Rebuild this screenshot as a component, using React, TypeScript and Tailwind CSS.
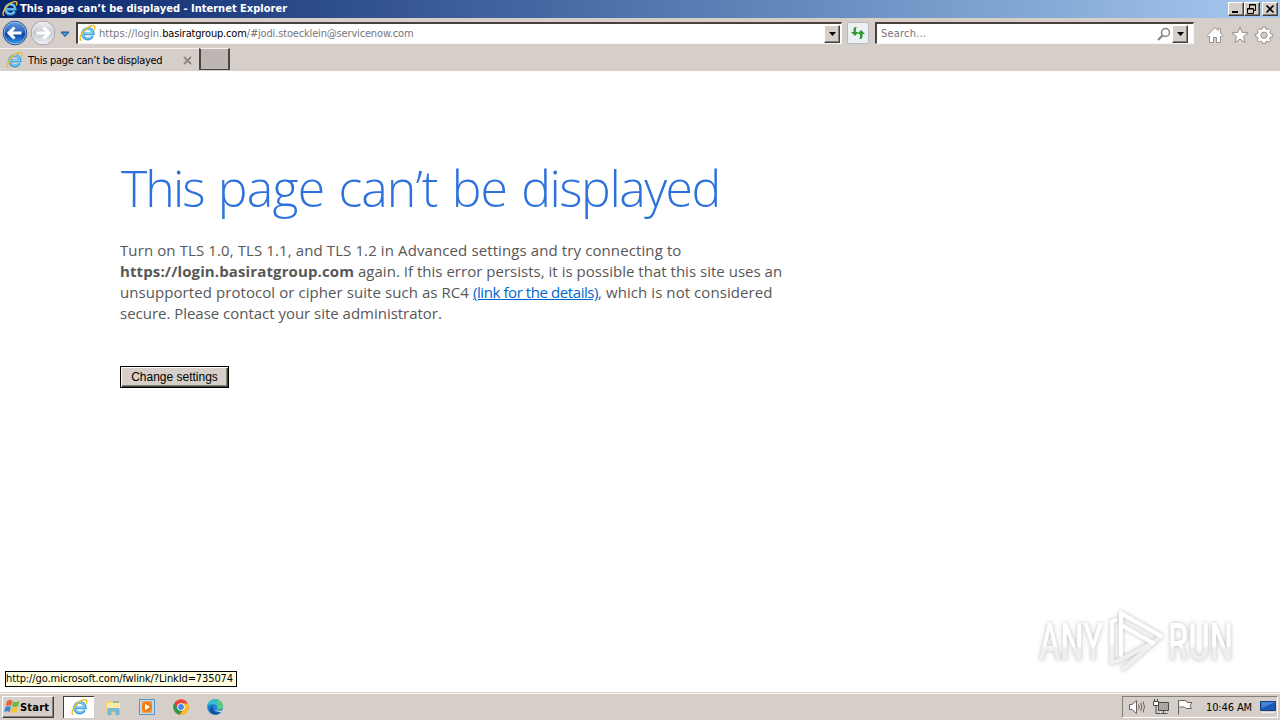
import type { ReactNode } from 'react';

const ui = "font-['DejaVu_Sans_Condensed','DejaVu_Sans',sans-serif] [font-stretch:condensed]";
const raised =
  'border border-t-white border-l-white border-r-[#404040] border-b-[#404040] bg-[#d6cfc9] shadow-[inset_-1px_-1px_0_#848078]';
const sunken = 'border-t-2 border-l-2 border-t-[#48413e] border-l-[#48413e] border-b border-r border-b-[#f8f6f4] border-r-[#f8f6f4] bg-white';

function IeIcon({ size = 17 }: { size?: number }) {
  return (
    <svg width={size} height={size} viewBox="0 0 17 17" fill="none" className="shrink-0">
      <path d="M13.6 11.2A5.3 5.3 0 1 1 14.2 8.9H5.2" stroke="#3b9be0" strokeWidth="2.9" />
      <path d="M13.2 10.8A5 5 0 1 1 13.8 8.5H5.2" stroke="#7bd0f5" strokeWidth="1.3" />
      <path d="M2.4 15.6C-.6 14.6 2.2 7.4 7.2 3.6C11.4.2 15.8-.3 15.8 2.4C15.8 3.3 15.5 4 15.1 4.8" stroke="#f0bd2c" strokeWidth="1.5" />
    </svg>
  );
}

function NavButton({ forward = false }: { forward?: boolean }) {
  return (
    <svg width="26" height="26" viewBox="0 0 26 26" className="shrink-0">
      <defs>
        <linearGradient id="back" x2="0" y2="1">
          <stop stopColor="#6a9bdf" />
          <stop offset=".48" stopColor="#2763bd" />
          <stop offset=".52" stopColor="#0a3f9d" />
          <stop offset="1" stopColor="#39a3ee" />
        </linearGradient>
        <linearGradient id="fwd" x2="0" y2="1">
          <stop stopColor="#f1f2f5" />
          <stop offset=".5" stopColor="#c6c9d1" />
          <stop offset="1" stopColor="#eef1f5" />
        </linearGradient>
      </defs>
      <circle cx="13" cy="13" r="11.8" fill={forward ? 'url(#fwd)' : 'url(#back)'} stroke={forward ? '#9da1aa' : '#294f8d'} />
      <circle cx="13" cy="13" r="10.9" fill="none" stroke="#fff" strokeOpacity=".45" />
      <path
        d="M12.5 7.5L7 13L12.5 18.5M7.5 13H19.5"
        fill="none"
        stroke="#fff"
        strokeWidth="3"
        transform={forward ? 'translate(26 0) scale(-1 1)' : undefined}
      />
    </svg>
  );
}

function DropButton() {
  return (
    <div className={`${raised} flex h-[18px] w-4 shrink-0 items-center justify-center`}>
      <svg width="7" height="4">
        <path d="M0 0H7L3.5 4Z" fill="#000" />
      </svg>
    </div>
  );
}

function WindowButton({ children }: { children: ReactNode }) {
  return (
    <div className={`${raised} h-[14px] w-4`}>
      <svg width="14" height="12" fill="none" stroke="#000">
        {children}
      </svg>
    </div>
  );
}

function TitleBar() {
  return (
    <div className="flex h-[18px] items-center bg-linear-to-r from-[#0a246a] to-[#a6caf0] pl-0.5">
      <IeIcon size={16} />
      <span className={`${ui} ml-0.5 pt-px text-[11px] font-bold tracking-[0.01px] whitespace-nowrap text-white`}>
        This page can’t be displayed - Internet Explorer
      </span>
      <div className="mr-[2px] ml-auto flex">
        <WindowButton>
          <path d="M3 9H9" strokeWidth="2" />
        </WindowButton>
        <WindowButton>
          <path d="M4.5 5V1.5H10.5V7.5H8M4 2H11M2.5 5.5H8.5V10.5H2.5ZM2 6H9" />
        </WindowButton>
        <div className="w-[2px]" />
        <WindowButton>
          <path d="M3.5 2.5L10.5 9.5M10.5 2.5L3.5 9.5" strokeWidth="1.7" />
        </WindowButton>
      </div>
    </div>
  );
}

function AddressRow() {
  return (
    <div className="flex h-[30px] items-start pt-1 pl-[2px]">
      <div className="-mt-0.5 flex gap-[2px]">
        <NavButton />
        <NavButton forward />
      </div>
      <svg width="10" height="7" className="mt-[9px] ml-1">
        <path d="M1 1H9L5 5.5Z" fill="#3b9be0" stroke="#1b4a80" />
      </svg>
      <div className={`${sunken} ml-[6px] flex h-[22px] w-[766px] items-center pl-px`}>
        <IeIcon />
        <div className={`${ui} ml-[3px] pt-[2px] text-[11px] whitespace-nowrap text-[#77757a]`}>
          <span className="tracking-[0.03px]">https://login.</span>
          <span className="tracking-[-0.17px] text-black">basiratgroup.com</span>
          <span className="tracking-[-0.16px]">/#jodi.stoecklein@servicenow.com</span>
        </div>
        <div className="mr-px ml-auto">
          <DropButton />
        </div>
      </div>
      <div className="ml-[5px] flex h-[22px] w-[22px] items-center justify-center rounded-xs border border-[#b5bac3] bg-[#eceff3]">
        <svg width="16" height="16" fill="#299b2f">
          <path d="M7 2C3 2 3.5 4 3.5 7H1L5 11L8.5 7H6C6 4 5.5 3.5 7 2ZM9 14C13 14 12.5 12 12.5 9H15L11 5L7.5 9H10C10 12 10.5 12.5 9 14Z" />
        </svg>
      </div>
      <div className={`${sunken} ml-[6px] flex h-[22px] w-[319px] items-center pr-[5px] pl-[4px]`}>
        <span className={`${ui} pt-[2px] text-[11px] tracking-[0.2px] text-[#77757a]`}>Search...</span>
        <svg width="14" height="14" fill="none" stroke="#85827f" className="mr-px ml-auto">
          <circle cx="8.5" cy="5.5" r="4" strokeWidth="1.5" />
          <path d="M5.5 8.5L1 13" strokeWidth="2.2" />
        </svg>
        <DropButton />
      </div>
      <div className="mt-1 ml-3 flex gap-[6.5px]">
        <svg width="18" height="18" fill="#fff" stroke="#96918d">
          <path d="M1 9.5L9 1.5L12 4.5V2.5H14.5V7L17 9.5L15.5 11L14.5 10V16.5H10.5V11.5H7.5V16.5H3.5V10L2.5 11Z" />
        </svg>
        <svg width="18" height="18" fill="#fff" stroke="#96918d">
          <path d="M9 1L11.2 6.4L17 6.8L12.5 10.6L14 16.4L9 13.2L4 16.4L5.5 10.6L1 6.8L6.8 6.4Z" />
        </svg>
        <svg width="18" height="18" viewBox="0 0 18 18" fill="#fff" stroke="#96918d">
          <path d="M7.5 1H10.5L10.9 3.1L12.2 3.6L14 2.4L16 4.5L14.8 6.3L15.3 7.5L17.3 8V11L15.2 11.4L14.7 12.6L15.8 14.4L13.7 16.4L12 15.2L10.8 15.7L10.4 17.5H7.5L7 15.6L5.8 15L4.1 16.2L2 14.1L3.1 12.4L2.6 11.2L.7 10.8V7.9L2.7 7.5L3.2 6.2L2.1 4.5L4.1 2.4L5.8 3.6L7.1 3.1Z" />
          <circle cx="9" cy="9.2" r="3.1" fill="#d6cfc9" />
        </svg>
      </div>
    </div>
  );
}

function TabRow() {
  return (
    <div className="flex h-[23px] items-start">
      <div className="flex h-[23px] w-[199px] items-center border-t border-[#f3f0ee] pl-[6px]">
        <IeIcon />
        <span className={`${ui} ml-[5px] pt-[2px] text-[11px] tracking-[-0.28px] whitespace-nowrap text-black`}>This page can’t be displayed</span>
        <svg width="9" height="9" className="mr-[7px] ml-auto">
          <path d="M1 1L8 8M8 1L1 8" stroke="#8b8682" strokeWidth="1.8" />
        </svg>
      </div>
      <div className="h-[22px] w-[31px] border-x-2 border-b border-t border-t-[#f3f0ee] border-r-[#484442] border-b-[#484442] border-l-[#484442] bg-[#bdb6b2]" />
    </div>
  );
}

function ErrorPage() {
  return (
    <main className="flex-1 bg-white pt-[82px] pl-[120px]">
      <h1 className="ml-px font-['Open_Sans','Noto_Sans',sans-serif] text-[50px] leading-[70px] font-light tracking-[-0.9px] [word-spacing:2px] whitespace-nowrap text-[#2d72dc]">
        <span className="tracking-[-1.9px]">This</span> <span className="tracking-[-0.8px]">page</span> can’t be{' '}
        <span className="tracking-[-1.5px]">displayed</span>
      </h1>
      <div className="mt-[17px] flex flex-col font-['Open_Sans','Noto_Sans',sans-serif] text-[15px] leading-[21px] whitespace-nowrap text-[#575757]">
        <span className="tracking-[0.107px]">Turn on TLS 1.0, TLS 1.1, and TLS 1.2 in Advanced settings and try connecting to</span>
        <span>
          <b className="tracking-[0.12px]">https://login.basiratgroup.com</b>
          <span className="tracking-[0.02px]"> again. If this error persists, it is possible that this site uses an</span>
        </span>
        <span>
          <span className="tracking-[0.07px]">unsupported protocol or cipher suite such as RC4 </span>
          <a className="tracking-[-0.42px] text-[#0066cc] underline">(link for the details)</a>
          <span className="tracking-[0.07px]">, which is not considered</span>
        </span>
        <span className="tracking-[-0.02px]">secure. Please contact your site administrator.</span>
      </div>
      <button className="mt-[42px] block h-[22px] w-[109px] border border-black bg-[#d6cfc9] font-['Liberation_Sans',sans-serif] text-[12px] leading-[18px] text-black shadow-[inset_1px_1px_0_#fff,inset_-1px_-1px_0_#404040,inset_-2px_-2px_0_#848078]">
        Change settings
      </button>
    </main>
  );
}

function Watermark() {
  return (
    <svg
      width="220"
      height="90"
      viewBox="1030 595 220 90"
      className="absolute top-[596px] left-[1030px] overflow-visible drop-shadow-[0_0_2px_#bbbbbb]"
    >
      <defs>
        <linearGradient id="wm" x2="0" y2="1">
          <stop offset=".55" stopColor="#fff" />
          <stop offset=".6" stopColor="#efefef" />
        </linearGradient>
      </defs>
      <g fill="url(#wm)" fontFamily="Roboto, sans-serif" fontSize="51" fontWeight="500">
        <text x="1039" y="659" textLength="64" lengthAdjust="spacingAndGlyphs">ANY</text>
        <text x="1168" y="659" textLength="65" lengthAdjust="spacingAndGlyphs">RUN</text>
      </g>
      <g fill="none" strokeLinejoin="round" strokeLinecap="round" strokeWidth="4">
        <path d="M1121 655V613L1161 635L1123 668" stroke="#f0f0f0" />
        <path d="M1116 619L1112 621V662L1120 659L1154 641" stroke="#f0f0f0" />
        <path d="M1121 654V612L1161 635M1112 642V621L1115 619M1123 625L1153 642" stroke="#fff" />
      </g>
    </svg>
  );
}

function StartFlag() {
  return (
    <svg width="17" height="16" viewBox="0 0 17 16">
      <path d="M3 2C5 .6 7 1 8.5 2L7.2 7C5.5 6 4 6 1.8 7Z" fill="#e8632c" />
      <path d="M9.3 2.4C11 3.4 13 3.4 15.5 2L14.2 7C12 8.2 10 8.2 8 7.2Z" fill="#6eb440" />
      <path d="M1.5 8C3.5 6.9 5.5 6.9 7 8L5.6 13C4 12 2 12 .2 13Z" fill="#3a87d3" />
      <path d="M7.8 8.2C10 9.3 12 9.3 14 8L12.6 13C10.5 14.3 8.5 14 6.4 13Z" fill="#f7c331" />
    </svg>
  );
}

function Taskbar() {
  return (
    <div className="flex h-[28px] items-start border-t border-[#d6cfc9] bg-[#d6cfc9] pt-[3px] pl-[2px] shadow-[inset_0_1px_0_#fff]">
      <div className={`${raised} flex h-[22px] w-[52px] items-center pl-px`}>
        <StartFlag />
        <span className={`${ui} -ml-px pt-[2px] text-[11px] font-bold tracking-[0.2px] text-black`}>Start</span>
      </div>
      <div className="ml-[9px] flex h-[22px] w-[31px] items-center justify-center border-t border-l border-t-[#404040] border-l-[#404040] bg-white">
        <IeIcon />
      </div>
      <div className="mt-[3px] ml-[11px] flex gap-[18px]">
        <svg width="16" height="16">
          <path d="M1 2H6L7 3.5H15V14H1Z" fill="#efd27a" />
          <path d="M2 4H15V10H2Z" fill="#fae9a8" />
          <path d="M8 3H14" stroke="#5ba75a" />
          <path d="M3 15.5V9.5H14V15.5H11V12H6V15.5Z" fill="#78bfe2" stroke="#4d9ac5" strokeWidth=".6" />
        </svg>
        <svg width="16" height="16">
          <path d="M.5.5H15.5V15.5H.5Z" fill="#b8dcf3" stroke="#5a94c4" />
          <path d="M3 2H13V14H3Z" fill="#f3a04a" />
          <circle cx="8" cy="8" r="5.2" fill="#ef7d14" />
          <path d="M6 4.7L11 8L6 11.3Z" fill="#fff" />
        </svg>
        <svg width="16" height="16" viewBox="0 0 16 16">
          <circle cx="8" cy="8" r="7.7" fill="#e8463a" />
          <path d="M1.3 4.2L4.7 10L8 11.8L6.8 15.6A7.7 7.7 0 0 1 1.3 4.2Z" fill="#259b4e" />
          <path d="M8 4.4H14.8A7.7 7.7 0 0 1 6.8 15.6L11.2 9.8Z" fill="#fbc116" />
          <circle cx="8" cy="8" r="3.8" fill="#fff" />
          <circle cx="8" cy="8" r="2.9" fill="#4285f4" />
        </svg>
        <svg width="16" height="16" viewBox="0 0 16 16">
          <circle cx="8" cy="8" r="7.8" fill="#1680cf" />
          <path d="M.4 7C1 2.8 4 .2 8 .2C12.8.2 16 3.5 15.8 7.2C15.6 10 12.5 11 9.8 10C10.8 8.3 9.5 5.3 6.5 5.2C4 5 1.6 5.8.4 7Z" fill="#35bfd0" />
          <path d="M10 .5C14 1.5 16.3 4.5 15.7 7.5C15.2 10 12.5 11 10 10C11.5 8 12 3.5 10 .5Z" fill="#5fcc72" />
          <path d="M6.4 7.2C4.5 11 8 15 13.8 13C11 17 4 16.2 3 11.6C2.6 9.5 4.2 7.5 6.4 7.2Z" fill="#124f9e" />
          <path d="M8 7C6 9 8 13 15 11.5L13.8 13C9.5 12.5 6 11 8 7Z" fill="#e5f0f3" />
        </svg>
      </div>
      <div className="mr-[2px] ml-auto flex h-[22px] w-[156px] items-center border border-t-[#848078] border-r-white border-b-white border-l-[#848078] pl-[6px]">
        <svg width="17" height="16" fill="#fff" stroke="#68635f">
          <path d="M.5 5.5H3L7.5 1.5V14.5L3 10.5H.5Z" />
          <path d="M9.5 5.5Q11 8 9.5 10.5M11.7 4Q14 8 11.7 12M14 2.5Q17 8 14 13.5" fill="none" />
        </svg>
        <svg width="17" height="16" fill="none" stroke="#4e4a48" className="ml-[7px]">
          <path d="M5.5 3.5H15.5V11.5H5.5ZM7.5 14.5H14.5M10.5 12V14" fill="#aaa6a2" />
          <path d="M.5 2.5H5.5V6.5H.5ZM1.5 0V2M4.5 0V2" fill="#fff" />
          <path d="M3 7V14.5H7" />
        </svg>
        <svg width="16" height="16" fill="#fff" stroke="#68635f" className="ml-[7px]">
          <path d="M2.5 1.5H8.5L10 3.5H15L13 6.5L14.5 9.5H9L7.5 8H2.5M1.5 1V15.5" />
        </svg>
        <span className={`${ui} ml-[13px] pt-[2px] text-[11px] tracking-[-0.12px] whitespace-nowrap text-black`}>10:46 AM</span>
        <svg width="16" height="14" className="mr-px ml-auto">
          <path d="M.5 1.5H15.5V10.5H.5Z" fill="#1d58b8" stroke="#173f80" />
          <path d="M1 2H15L2 8Z" fill="#4583d9" />
          <path d="M2 12.5H14" stroke="#e9edf2" />
        </svg>
      </div>
    </div>
  );
}

export default function App() {
  return (
    <div className="relative flex h-[720px] w-[1280px] flex-col overflow-hidden bg-[#d6cfc9]">
      <TitleBar />
      <AddressRow />
      <TabRow />
      <ErrorPage />
      <Taskbar />
      <div className={`${ui} absolute top-[671px] left-[5px] flex h-[16px] w-[232px] items-center border border-black bg-[#ffffe1] pt-px text-[11px] tracking-[-0.12px] whitespace-nowrap text-black`}>
        http://go.microsoft.com/fwlink/?LinkId=735074
      </div>
      <Watermark />
    </div>
  );
}
